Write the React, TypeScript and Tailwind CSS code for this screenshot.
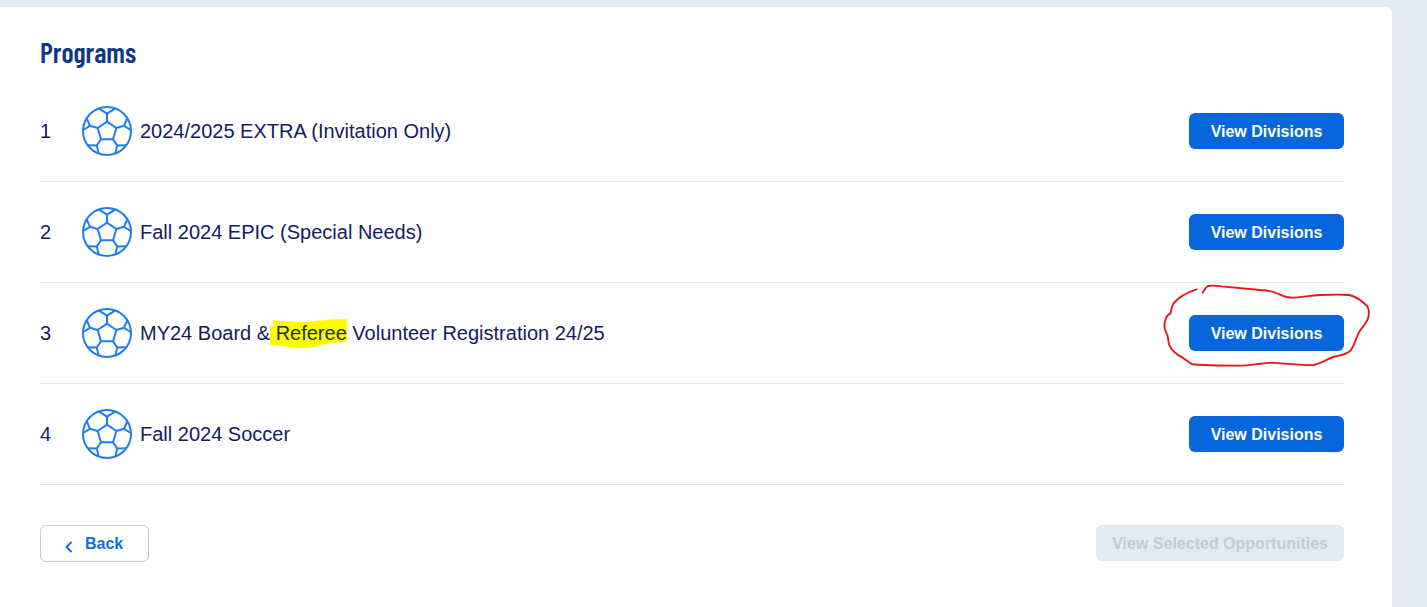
import React from 'react';

type Program = {
  id: number;
  name: React.ReactNode;
  circled?: boolean;
};

// --- drawings ---
const SoccerBall: React.FC = () => (
  <svg
    viewBox="0 0 50 50"
    className="size-[50px] shrink-0"
    fill="none"
    stroke="#1f7cf0"
    strokeWidth="2"
    strokeLinejoin="round"
    aria-hidden="true"
  >
    <circle cx="25" cy="25" r="24" />
    <path d="M25 15.7 34.4 22 31 33.2H19L15.6 22Z" />
    <path d="M25 15.7V7.6M17 2.6 25 7.6 33 2.6" />
    <path d="M15.6 22 8 19.8M1.2 24 8 19.8 4.6 12" />
    <path d="M34.4 22 42 19.8M48.8 24 42 19.8 45.4 12" />
    <path d="M19 33.2 14.8 39.4M5.2 39.2 14.8 39.4 16.6 47.4" />
    <path d="M31 33.2 35.2 39.4M44.8 39.2 35.2 39.4 33.4 47.4" />
  </svg>
);

const PenCircle: React.FC = () => (
  <svg
    viewBox="0 0 720 315"
    className="pointer-events-none absolute -left-[39px] -top-10 h-[105px] w-60 max-w-none"
    fill="none"
    stroke="#e01818"
    strokeWidth="5.5"
    strokeLinecap="round"
    strokeLinejoin="round"
    aria-hidden="true"
  >
    <path d="M140 43C112 52 84 68 70 86C64 95 64 108 61 116C55 119 50 122 48 130C43 142 42 160 48 172C56 182 53 194 57 208C64 226 82 240 98 248L125 267C150 271 210 272 280 272C310 270 340 264 368 263C410 266 450 272 490 270C515 266 530 252 550 246C570 240 590 240 602 226C615 210 618 186 628 170C638 154 655 140 656 122C658 108 657 98 648 90C636 78 620 66 598 60C570 58 540 59 510 60C480 62 450 67 425 68C405 68 395 60 378 54C365 48 350 46 330 45L215 34C200 32 185 30 174 33C165 38 162 46 158 53" />
  </svg>
);

const Marked: React.FC<{ children: React.ReactNode }> = ({ children }) => (
  <span className="relative isolate text-[#26301a]">
    <svg
      viewBox="0 0 78 30"
      className="absolute -left-1.5 -top-1 -z-10 h-[30px] w-[78px] max-w-none"
      aria-hidden="true"
    >
      <path
        d="M3 2C10 3 20 3 32 4C44 4 54 1 77 1V23C72 25 66 24 60 25C50 28 40 30 30 30C20 29 12 28 0 27V8H3Z"
        fill="#fdfd00"
      />
    </svg>
    {children}
  </span>
);

const programs: Program[] = [
  { id: 1, name: '2024/2025 EXTRA (Invitation Only)' },
  { id: 2, name: 'Fall 2024 EPIC (Special Needs)' },
  {
    id: 3,
    name: (
      <>
        MY24 Board &amp; <Marked>Referee</Marked> Volunteer Registration 24/25
      </>
    ),
    circled: true,
  },
  { id: 4, name: 'Fall 2024 Soccer' },
];

const ProgramRow: React.FC<{ program: Program }> = ({ program }) => (
  <li className="flex items-center border-b border-[#e3e5e8] py-[25px] text-xl text-[#14205c]">
    <span className="w-[42px] shrink-0">{program.id}</span>
    <SoccerBall />
    <span className="ml-2 flex-1">{program.name}</span>
    <div className="relative">
      <button
        type="button"
        className="block h-9 w-[155px] rounded-md bg-[#0666dc] pt-0.5 text-base font-bold text-white"
      >
        View Divisions
      </button>
      {program.circled && <PenCircle />}
    </div>
  </li>
);

const App: React.FC = () => {
  return (
    <div className="flex min-h-screen bg-[#e3eaf2] pt-[7px] pr-[35px] font-['Liberation_Sans',Arial,sans-serif]">
      <main className="flex-1 rounded-tr-md bg-white pt-6 pr-12 pb-10 pl-10">
        <h1 className="mb-2 font-['Barlow_Condensed','Liberation_Sans_Narrow','Roboto_Condensed',sans-serif] text-[28px] leading-[42px] font-semibold text-[#103787]">
          Programs
        </h1>

        <ul>
          {programs.map((program) => (
            <ProgramRow key={program.id} program={program} />
          ))}
        </ul>

        <div className="mt-10 flex items-start justify-between">
          <button
            type="button"
            className="flex h-[37px] w-[109px] items-center rounded-md border border-[#c5cbdb] pl-6 font-bold text-[#0f6fe0]"
          >
            <svg
              viewBox="0 0 8 12"
              className="mt-1.5 mr-3 h-3 w-2"
              fill="none"
              stroke="currentColor"
              strokeWidth="2"
              aria-hidden="true"
            >
              <path d="M6.5 1 1.5 6 6.5 11" />
            </svg>
            Back
          </button>
          <button
            type="button"
            disabled
            className="h-9 rounded-md bg-[#e3eaf2] px-4 pt-0.5 font-bold text-[#c3cad9]"
          >
            View Selected Opportunities
          </button>
        </div>
      </main>
    </div>
  );
};

export default App;
